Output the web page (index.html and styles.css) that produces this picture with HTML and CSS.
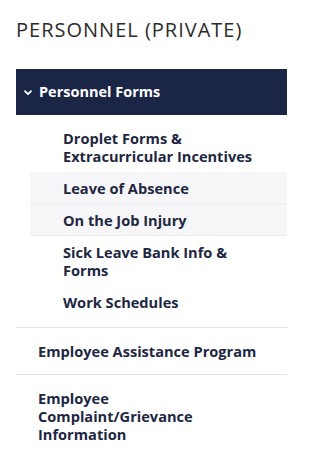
FILE: index.html
```html
<!DOCTYPE html>
<html lang="en">
<head>
<meta charset="utf-8">
<link rel="stylesheet" href="styles.css">
</head>
<body>
<nav class="side">
  <h2 class="title">PERSONNEL (PRIVATE)</h2>
  <div class="group">
    <div class="bar">
      <svg class="chev" width="8" height="6" viewBox="0 0 8 6"><polyline points="1,1.2 4,4.2 7,1.2" fill="none" stroke="#fff" stroke-width="1.8" stroke-linecap="round" stroke-linejoin="round"/></svg>
      <span>Personnel Forms</span>
    </div>
    <ul class="sub">
      <li>Droplet Forms &amp; Extracurricular Incentives</li>
      <li class="hl">Leave of Absence</li>
      <li class="hl">On the Job Injury</li>
      <li>Sick Leave Bank Info &amp; Forms</li>
      <li>Work Schedules</li>
    </ul>
  </div>
  <div class="top">Employee Assistance Program</div>
  <div class="top">Employee Complaint/Grievance Information</div>
</nav>
</body>
</html>
```
FILE: styles.css
```css
html, body { margin: 0; padding: 0; background: #fff; }
body { font-family: "Open Sans", "Noto Sans", sans-serif; }
.side { width: 271px; margin-left: 16px; }
.title {
  margin: 0;
  padding-top: 17px;
  height: 69px;
  box-sizing: border-box;
  font-size: 20px;
  font-weight: 400;
  line-height: 26px;
  letter-spacing: 1px;
  color: #2b2b2b;
}
.group { border-bottom: 1px solid #e3e3e6; padding-bottom: 9px; }
.bar {
  height: 46px;
  background: #1b2545;
  display: flex;
  align-items: center;
  padding-left: 8px;
  gap: 7px;
  color: #fff;
  font-weight: 700;
  font-size: 14.5px;
  line-height: 18px;
}
.chev { display: block; margin-top: 1px; }
.sub { list-style: none; margin: 7px 0 0 14px; padding: 0; }
.sub li {
  padding: 7px 22px 7px 33px;
  font-size: 14.6px;
  line-height: 18px;
  font-weight: 700;
  color: #1e2742;
}
.sub li.hl { background: #f6f6f8; border-bottom: 1px solid #ededf0; padding-bottom: 6px; }
.top {
  padding: 14px 30px 14px 22px;
  font-size: 14.6px;
  line-height: 18px;
  font-weight: 700;
  color: #1e2742;
  border-bottom: 1px solid #e3e3e6;
}
.top:last-child { border-bottom: none; }
```
